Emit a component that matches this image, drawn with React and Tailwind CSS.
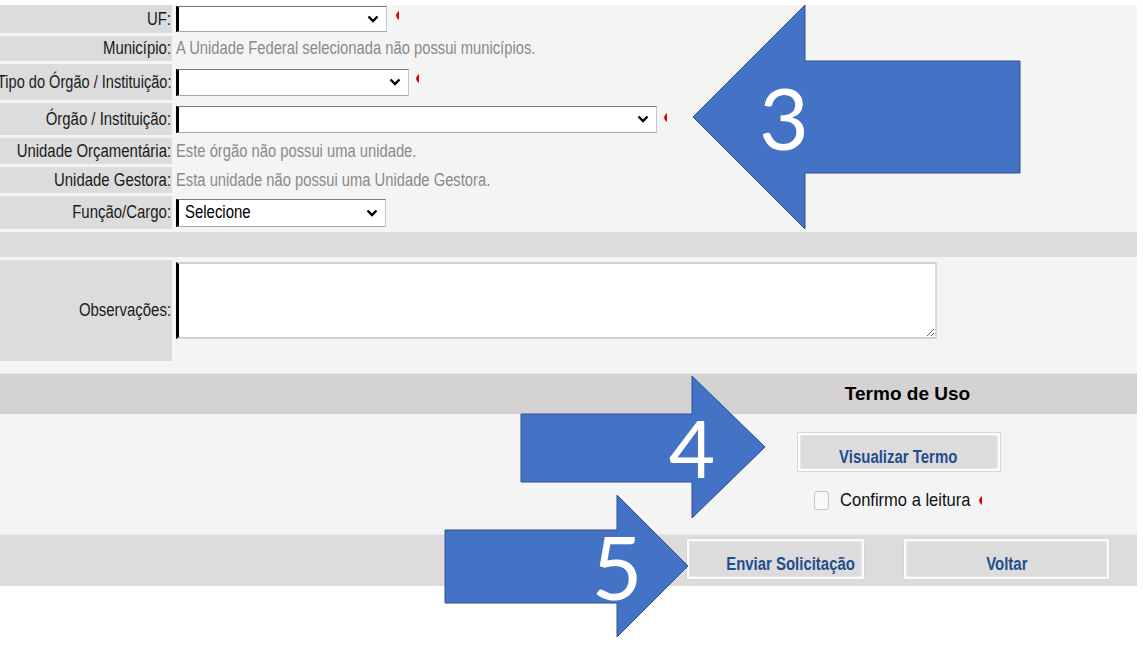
import React from 'react';

const font = "font-['Liberation_Sans',Arial,sans-serif]";

function Marker() {
    return (
        <svg width="5" height="9" viewBox="0 0 5 9" className="shrink-0">
            <path d="M5 0 L5 9 Q-1 4.5 5 0 Z" fill="#e00000" />
        </svg>
    );
}

function Chevron() {
    return (
        <svg width="12" height="8" viewBox="0 0 12 8">
            <polyline points="1.5,1.5 6,6 10.5,1.5" fill="none" stroke="#000" strokeWidth="2.4" />
        </svg>
    );
}

// the form text is a narrow face; squeeze Liberation Sans to the same width
function Narrow({ className, children }) {
    return <span className={`inline-block whitespace-nowrap ${className}`}>{children}</span>;
}

function FakeSelect({ className, text }) {
    return (
        <div className={`flex items-center justify-between bg-white border-l-[3px] border-l-black border-t border-t-[#7a7a7a] border-r border-r-[#c8c8c8] border-b border-b-[#a8a8a8] pl-[6px] pr-[7px] ${className}`}>
            <Narrow className="origin-left scale-x-[0.83] text-[18px] text-black">{text}</Narrow>
            <Chevron />
        </div>
    );
}

function Row({ label, className, squeeze = 'scale-x-[0.83]', children }) {
    return (
        <div className={`flex ${className}`}>
            <div className="w-[172px] shrink-0 bg-[#dcdcdc] flex items-center justify-end pr-[1px] text-[18px] text-[#1a1a1a]">
                <Narrow className={`origin-right ${squeeze}`}>{label}</Narrow>
            </div>
            <div className="flex items-center pl-[4px]">{children}</div>
        </div>
    );
}

function Info({ children }) {
    return <Narrow className="origin-left scale-x-[0.82] text-[18px] text-[#8a8a8a]">{children}</Narrow>;
}

function Btn({ className, textClass = '', children }) {
    return (
        <div className={`border border-[#d6d6d6] bg-[#fbfbfb] p-[2px] ${className}`}>
            <div className={`h-full w-full bg-[#dcdcdc] border border-[#e8e8e8] flex items-center justify-center pt-[10px] text-[18px] font-bold text-[#1f4e8d] ${textClass}`}>
                <Narrow className="origin-center scale-x-[0.83]">{children}</Narrow>
            </div>
        </div>
    );
}

export default function App() {
    return (
        <div className={`relative w-[1143px] h-[646px] overflow-hidden bg-white ${font}`}>
            <div className="w-[1137px] mt-[5px] bg-[#f4f4f4] flex flex-col">
                <div className="flex flex-col gap-[3px]">
                    <Row label="UF:" className="h-[28px]">
                        <FakeSelect className="w-[211px] h-[26px]" text="" />
                        <div className="ml-[7px] -mt-[8px]"><Marker /></div>
                    </Row>
                    <Row label="Município:" className="h-[25px]">
                        <Info>A Unidade Federal selecionada não possui municípios.</Info>
                    </Row>
                    <Row label="Tipo do Órgão / Instituição:" squeeze="scale-x-[0.81]" className="h-[36px]">
                        <FakeSelect className="w-[233px] h-[27px]" text="" />
                        <div className="ml-[5px] -mt-[8px]"><Marker /></div>
                    </Row>
                    <Row label="Órgão / Instituição:" className="h-[32px]">
                        <FakeSelect className="w-[481px] h-[27px]" text="" />
                        <div className="ml-[5px] -mt-[4px]"><Marker /></div>
                    </Row>
                    <Row label="Unidade Orçamentária:" className="h-[26px]">
                        <Info>Este órgão não possui uma unidade.</Info>
                    </Row>
                    <Row label="Unidade Gestora:" className="h-[26px]">
                        <Info>Esta unidade não possui uma Unidade Gestora.</Info>
                    </Row>
                    <Row label="Função/Cargo:" className="h-[33px]">
                        <FakeSelect className="w-[210px] h-[28px]" text="Selecione" />
                    </Row>
                    <div className="h-[25px] bg-[#dcdcdc]" />
                    <div className="flex h-[101px]">
                        <div className="w-[172px] shrink-0 bg-[#dcdcdc] flex items-center justify-end pr-[1px] text-[18px] text-[#1a1a1a]">
                            <Narrow className="origin-right scale-x-[0.83]">Observações:</Narrow>
                        </div>
                        <div className="pl-[4px] pt-[2px]">
                            <textarea className="block w-[761px] h-[77px] bg-white border-l-[3px] border-l-black border-t-2 border-t-[#d0d0d0] border-r-2 border-r-[#d8d8d8] border-b-2 border-b-[#d0d0d0] outline-none resize" />
                        </div>
                    </div>
                </div>

                <div className="h-[12px]" />

                <div className="h-[41px] bg-[#d4d2d2] border-t border-t-[#e6e6e6] flex justify-end">
                    <div className="w-[477px] flex items-center justify-center pl-[18px] text-[19px] font-bold text-black">
                        Termo de Uso
                    </div>
                </div>

                <div className="h-[120px] flex justify-end">
                    <div className="w-[477px] flex flex-col items-center pt-[18px]">
                        <Btn className="w-[204px] h-[40px]">Visualizar Termo</Btn>
                        <div className="flex items-center mt-[14px] pr-[2px]">
                            <div className="w-[15px] h-[19px] rounded-[3px] border border-[#c6c6c6] bg-[#f8f8f8]" />
                            <div className="ml-[11px] w-[133px]">
                                <span className="inline-block whitespace-nowrap origin-left scale-x-[0.87] text-[19px] text-[#111]">Confirmo a leitura</span>
                            </div>
                            <div className="ml-[4px]"><Marker /></div>
                        </div>
                    </div>
                </div>

                <div className="h-[52px] bg-[#dcdcdc] border-t border-t-[#e8e8e8] flex justify-end items-start pt-[3px] pr-[27px] gap-[38px]">
                    <Btn className="w-[179px] h-[42px]" textClass="pl-[30px]">Enviar Solicitação</Btn>
                    <Btn className="w-[207px] h-[42px]">Voltar</Btn>
                </div>
            </div>

            <svg className="absolute inset-0 pointer-events-none" width="1143" height="646" viewBox="0 0 1143 646">
                <polygon points="693,117 805,5 805,61 1020,61 1020,173 805,173 805,229" fill="#4472C4" stroke="#2F528F" strokeWidth="1" />
                <polygon points="521,414 692,414 692,376 765,447 692,518 692,482 521,482" fill="#4472C4" stroke="#2F528F" strokeWidth="1" />
                <polygon points="445,530 617,530 617,495 688,566 617,637 617,603 445,603" fill="#4472C4" stroke="#2F528F" strokeWidth="1" />
                <text x="784" y="150" textAnchor="middle" fill="#fff" className="font-[Lato]" fontSize="86">3</text>
                <text x="692" y="478" textAnchor="middle" fill="#fff" className="font-[Lato]" fontSize="80">4</text>
                <text x="617" y="600" textAnchor="middle" fill="#fff" className="font-[Lato]" fontSize="88">5</text>
            </svg>
        </div>
    );
}
